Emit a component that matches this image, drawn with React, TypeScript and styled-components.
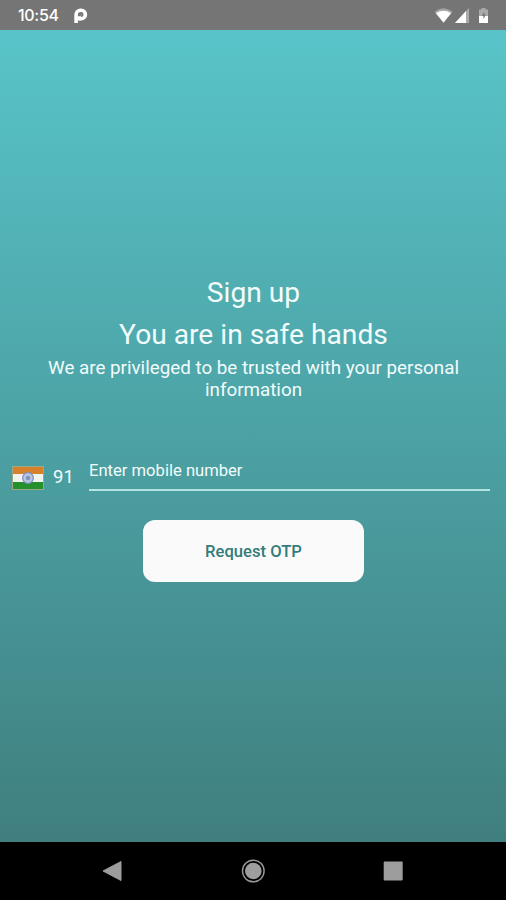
import React from "react";
import styled, { createGlobalStyle } from "styled-components";

const GlobalStyle = createGlobalStyle`
  * { box-sizing: border-box; }
  body { margin: 0; font-family: Roboto, sans-serif; }
`;

const Screen = styled.div`
  display: flex;
  flex-direction: column;
  width: 506px;
  height: 900px;
  overflow: hidden;
`;

const StatusBar = styled.header`
  display: flex;
  align-items: center;
  height: 30px;
  flex: none;
  padding: 0 14px 0 18px;
  background: #757575;
  color: #fff;
`;

const Clock = styled.span`
  font: 500 16px/30px Inter, sans-serif;
  letter-spacing: -0.3px;
  width: 55px;
  white-space: nowrap;
`;

const StatusIcons = styled.div`
  display: flex;
  align-items: center;
  margin-left: auto;
`;

const Content = styled.main`
  display: flex;
  flex-direction: column;
  align-items: center;
  flex: 1;
  padding-top: 242px;
  background: linear-gradient(#58c4c9, #407f7f);
  color: #f2fcfc;
`;

const Heading = styled.h1`
  margin: 0;
  padding-left: 1px;
  font-size: 28.2px;
  font-weight: 400;
  line-height: 42px;
  white-space: nowrap;
`;

const Subtitle = styled.p`
  margin: 1px 0 0;
  padding-left: 1px;
  width: 440px;
  text-align: center;
  font-size: 18.8px;
  line-height: 22px;
`;

const PhoneRow = styled.div`
  display: flex;
  align-items: flex-start;
  width: 100%;
  height: 40px;
  margin-top: 52px;
  padding: 0 16px 0 12px;
`;

const Flag = styled.svg`
  margin-top: 13px;
  flex: none;
`;

const DialCode = styled.span`
  width: 45px;
  padding-left: 9px;
  font-size: 18.5px;
  line-height: 22px;
  margin-top: 13px;
`;

const NumberField = styled.div`
  flex: 1;
  height: 38px;
  padding-top: 7px;
  border-bottom: 2px solid #b5e3e3;
  font-size: 16.6px;
  line-height: 22px;
`;

const OtpButton = styled.button`
  width: 221px;
  height: 62px;
  margin: 27px 0 0 1px;
  border: 0;
  padding: 1px 0 0;
  border-radius: 12px;
  background: #fafafa;
  color: #327c7a;
  font: 500 16.6px/62px Roboto, sans-serif;
`;

const NavBar = styled.nav`
  display: flex;
  align-items: center;
  justify-content: space-between;
  height: 58px;
  flex: none;
  padding: 0 102px 0 101px;
  background: #000;
`;

const spokes = Array.from({ length: 12 }, (_, i) => i * 30);

export default function App() {
  return (
    <Screen>
      <GlobalStyle />
      <StatusBar>
        <Clock>10:54</Clock>
        <svg width="16" height="17" viewBox="0 0 16 17">
          <path
            d="M3.1 16V7.7A4.4 4.4 0 0 1 7.5 3.3h.7a4.2 4.2 0 0 1 0 8.4H6"
            fill="none"
            stroke="#fff"
            strokeWidth="3.6"
            strokeLinejoin="round"
          />
          <path d="M4.5 9.2H8v4.2H4.5Z" fill="#fff" />
          <circle cx="8" cy="7.5" r="1.6" fill="#858585" />
        </svg>
        <StatusIcons>
          <svg width="58" height="20" viewBox="0 0 58 20">
            <path d="M.5 6.8Q9.5-.4 18.5 6.8L9.5 18Z" fill="#a5a5a5" />
            <path d="M1.9 8.3Q9.5 3.4 17.1 8.3L9.5 17.6Z" fill="#fff" />
            <path d="M35 3v15H21Z" fill="#aaa" />
            <path d="M32 6v12H21Z" fill="#fff" />
            <path d="M47.5 4.5V3h4v1.5H54V18h-9V4.5Z" fill="#aaa" />
            <path d="M45 11h9v7h-9Z" fill="#fff" />
            <path d="M50.3 6.5 47.8 11h1.6v3.3l2.5-4.7h-1.6Z" fill="#777" />
          </svg>
        </StatusIcons>
      </StatusBar>
      <Content>
        <Heading>Sign up</Heading>
        <Heading>You are in safe hands</Heading>
        <Subtitle>
          We are privileged to be trusted with your personal information
        </Subtitle>
        <PhoneRow>
          <Flag width="32" height="24" viewBox="0 0 32 24">
            <rect width="32" height="24" fill="#99aa87" />
            <path d="M1 1h30v7H1Z" fill="#d8812c" />
            <path d="M1 8h30v8H1Z" fill="#f1f3f1" />
            <path d="M1 16h30v7H1Z" fill="#26902c" />
            <circle cx="16" cy="12" r="5.3" fill="#cbd4e5" stroke="#7890c5" strokeWidth="1.3" />
            {spokes.map((angle) => (
              <path key={angle} d="M16 7v3" transform={`rotate(${angle} 16 12)`} stroke="#91a5cf" strokeWidth=".5" />
            ))}
            <circle cx="16" cy="12" r="2.2" fill="#7c91c4" />
          </Flag>
          <DialCode>91</DialCode>
          <NumberField>Enter mobile number</NumberField>
        </PhoneRow>
        <OtpButton>Request OTP</OtpButton>
      </Content>
      <NavBar>
        <svg width="22" height="22" viewBox="0 0 22 22">
          <path d="M2 11 20 1.5v19Z" fill="#9d9d9d" stroke="#9d9d9d" strokeLinejoin="round" />
        </svg>
        <svg width="24" height="24" viewBox="0 0 24 24">
          <circle cx="12.3" cy="12" r="10.8" fill="none" stroke="#999" strokeWidth="1.4" />
          <circle cx="12.3" cy="12" r="8.3" fill="#9e9e9e" />
        </svg>
        <svg width="22" height="22" viewBox="0 0 22 22">
          <rect x="1.7" y="1.5" width="19" height="19" rx="1" fill="#9d9d9d" />
        </svg>
      </NavBar>
    </Screen>
  );
}
